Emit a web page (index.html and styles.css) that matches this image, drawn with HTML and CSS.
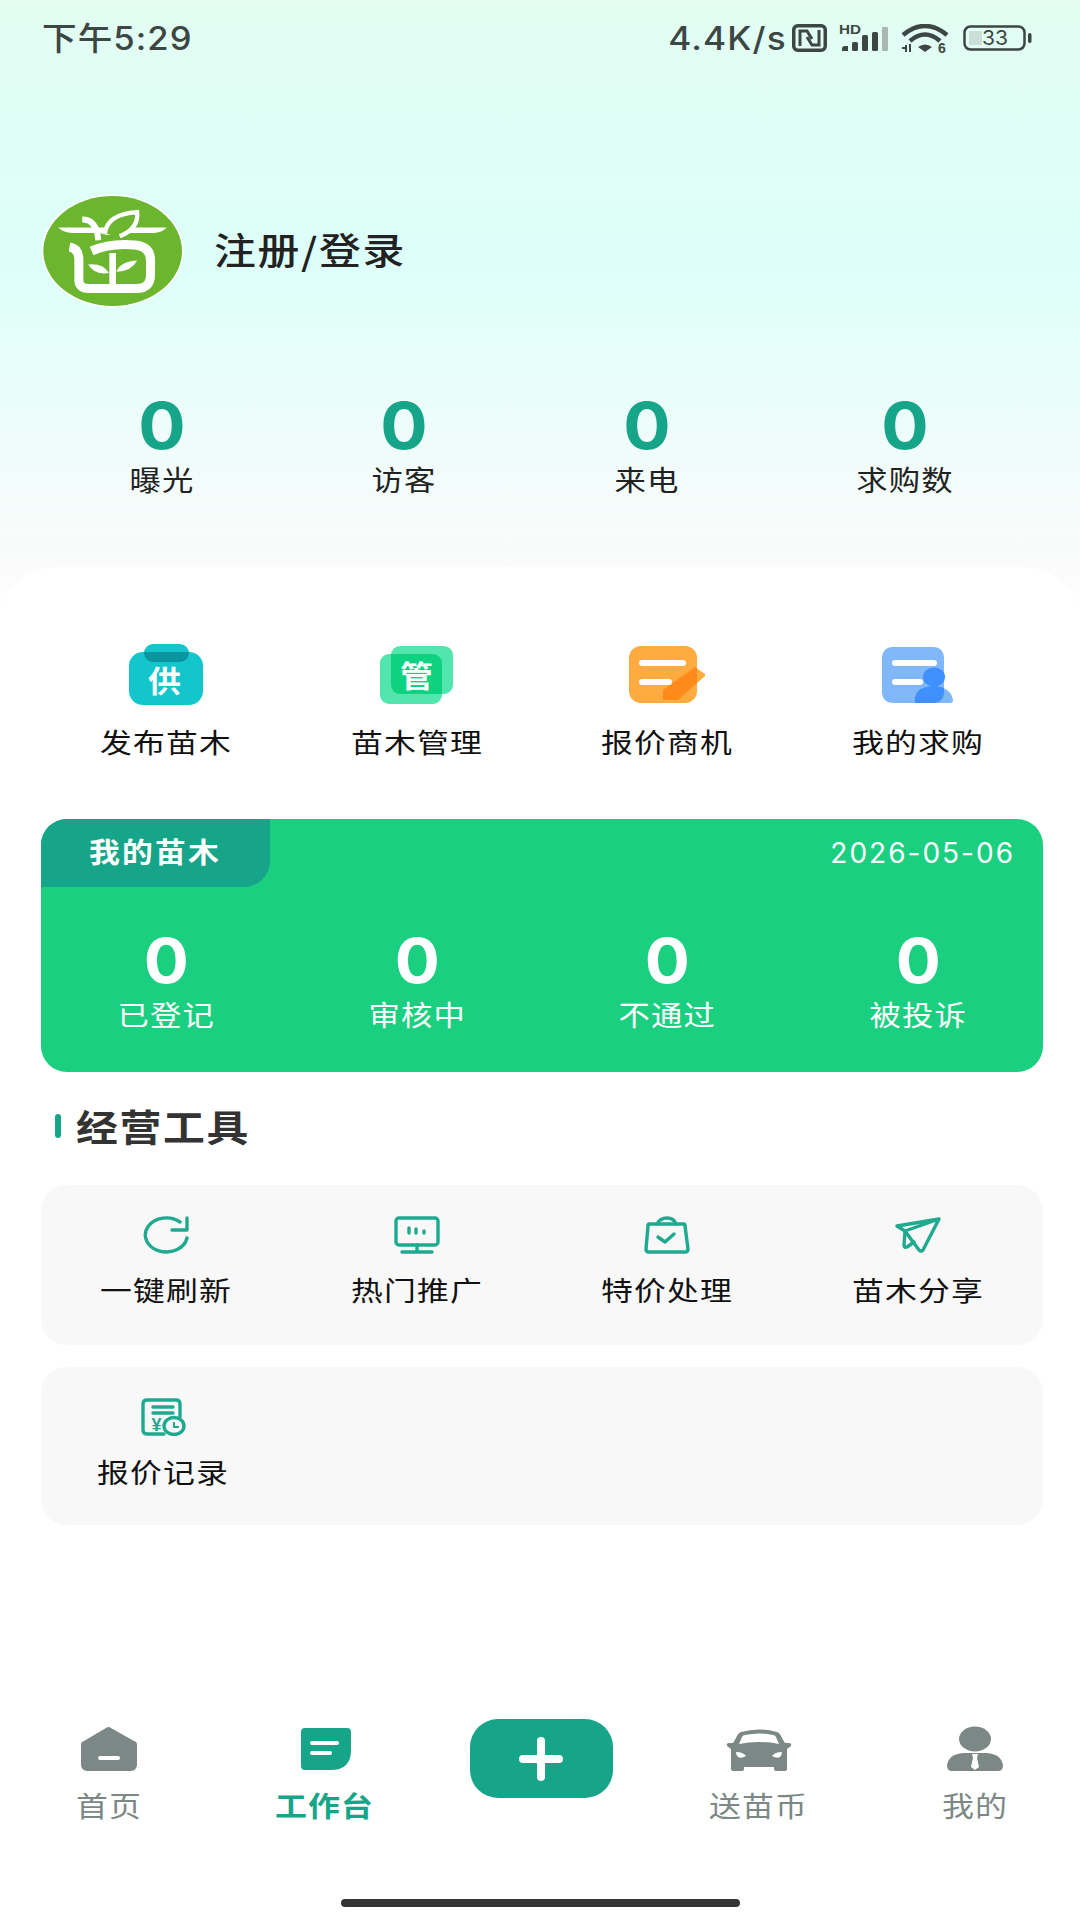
FILE: index.html
```html
<!DOCTYPE html>
<html lang="zh-CN">
<head>
    <meta charset="UTF-8">
    <meta name="viewport" content="width=device-width, initial-scale=1.0">
    <title>工作台</title>
    <link rel="stylesheet" href="styles.css">
</head>
<body>
    <div class="page">
        <div class="hero">
            <div class="status-bar">
                <span class="status-time">下午5:29</span>
                <div class="status-right">
                    <span class="status-speed">4.4K/s</span>
                    <svg width="35" height="28" viewBox="0 0 35 28"><rect x="1.750" y="1.750" width="31.500" height="24.500" rx="4" fill="none" stroke="#3c4643" stroke-width="3.500"/><path d="M8 22V7h7l5 8M27 6V21h-7l-5-8" fill="none" stroke="#3c4643" stroke-width="3"/></svg>
                    <svg width="50" height="28" viewBox="0 0 50 28"><text x="0" y="10" class="st-hd" textLength="22" lengthAdjust="spacingAndGlyphs">HD</text><path d="M3 27v-2q0-3 3-3h3v5z" fill="#3c4643"/><rect x="13" y="18" width="6" height="9" rx="1.500" fill="#3c4643"/><rect x="23" y="11" width="6" height="16" rx="1.500" fill="#3c4643"/><rect x="33" y="8" width="6" height="19" rx="1.500" fill="#3c4643"/><rect x="43" y="3" width="6" height="24" rx="1" fill="#a9b8b2"/></svg>
                    <svg width="48" height="29" viewBox="0 0 48 29"><path d="M2 11Q24-7 46 11M9 17Q24 4 39 17" fill="none" stroke="#3c4643" stroke-width="4.500"/><path d="M17 23q7-5 14 0l-7 5z" fill="#3c4643"/><path d="M1 24h5M5 21v7M9 20v8" fill="none" stroke="#3c4643" stroke-width="2"/><text x="37" y="29" class="st-six">6</text></svg>
                    <svg class="st-batt" width="70" height="26" viewBox="0 0 70 26"><rect x="1.500" y="1.500" width="60" height="23" rx="6" fill="none" stroke="#3c4643" stroke-width="2.500"/><path d="M6 6h13v14H6z" fill="#c9dfd7"/><rect x="65" y="8" width="3.500" height="10" rx="1.700" fill="#3c4643"/><text x="32" y="20" class="st-level" textLength="26" lengthAdjust="spacingAndGlyphs">33</text></svg>
                </div>
            </div>

            <div class="profile">
                <svg class="avatar" width="142" height="114" viewBox="68 70 424 340">
                    <ellipse cx="279" cy="240" rx="212" ry="168" fill="#fff"/>
                    <ellipse cx="279" cy="240" rx="207" ry="164" fill="#6cb52f"/>
                    <path d="M116 170H440Q425 188 395 186H300L262 192 240 186H165Q135 188 116 170Z" fill="#fff"/>
                    <path d="M188 146Q232 146 236 208" fill="none" stroke="#fff" stroke-width="18"/>
                    <path d="M256 188Q262 130 352 124Q358 172 300 196" fill="#6cb52f" stroke="#fff" stroke-width="13"/>
                    <path d="M150 228Q176 232 178 262V326Q178 352 208 352H350Q392 352 392 310V268Q392 226 345 222Q270 216 216 240" fill="none" stroke="#fff" stroke-width="27"/>
                    <path d="M279 246V350" stroke="#fff" stroke-width="20"/>
                    <path d="M206 280Q252 276 268 306Q224 312 206 280Z" fill="#fff"/>
                    <path d="M352 268Q302 270 290 302Q336 300 352 268Z" fill="#fff"/>
                </svg>
                <span class="profile-name">注册/登录</span>
            </div>

            <div class="stats">
                <div class="stat"><div class="stat-num">0</div><div class="stat-label">曝光</div></div>
                <div class="stat"><div class="stat-num">0</div><div class="stat-label">访客</div></div>
                <div class="stat"><div class="stat-num">0</div><div class="stat-label">来电</div></div>
                <div class="stat"><div class="stat-num">0</div><div class="stat-label">求购数</div></div>
            </div>
        </div>

        <div class="sheet">
            <div class="quick">
                <div class="quick-item">
                    <svg width="80" height="62" viewBox="0 0 80 62">
                        <rect x="18" y="0" width="45" height="18" rx="9" fill="#13c6cc"/>
                        <rect x="3" y="8" width="74" height="53" rx="14" fill="#13c6cc"/>
                        <path d="M18 9a9 9 0 0 0 9 9h27a9 9 0 0 0 9-9v-1H18z" fill="#0a95a1"/>
                        <text x="39" y="48" class="icon-char" textLength="34" lengthAdjust="spacingAndGlyphs">供</text>
                    </svg>
                    <span>发布苗木</span>
                </div>
                <div class="quick-item">
                    <svg width="80" height="62" viewBox="0 0 80 62">
                        <rect x="14" y="2" width="62" height="48" rx="9" fill="#52e6ae"/>
                        <rect x="3" y="10" width="62" height="50" rx="9" fill="#52e6ae"/>
                        <path d="M14 10H56a9 9 0 0 1 9 9V50H23a9 9 0 0 1-9-9z" fill="#0ed27f"/>
                        <text x="40" y="43" class="icon-char" textLength="34" lengthAdjust="spacingAndGlyphs">管</text>
                    </svg>
                    <span>苗木管理</span>
                </div>
                <div class="quick-item">
                    <svg width="80" height="62" viewBox="0 0 80 62">
                        <rect x="2" y="2" width="68" height="57" rx="12" fill="#ffab3f"/>
                        <path d="M68 23L78 30a2 2 0 0 1 0 2L70 39z" fill="#ffab3f"/>
                        <path d="M36 46L68 23 70 24.500V39L51 56H38Q36 56 36 54Z" fill="#ff8a1c"/>
                        <rect x="12" y="16" width="47" height="6" rx="3" fill="#fff"/>
                        <rect x="12" y="35" width="33" height="6" rx="3" fill="#fff"/>
                    </svg>
                    <span>报价商机</span>
                </div>
                <div class="quick-item">
                    <svg width="80" height="62" viewBox="0 0 80 62">
                        <rect x="4" y="3" width="62" height="56" rx="10" fill="#80b7f9"/>
                        <rect x="14" y="16" width="45" height="6" rx="3" fill="#fff"/>
                        <rect x="14" y="35" width="31" height="6" rx="3" fill="#fff"/>
                        <path d="M37 59q-2-16 18-17 18 1 20 14a3 3 0 0 1-3 3z" fill="#80b7f9"/>
                        <path d="M37 59q-2-16 18-17 6 0 11 2v5a10 10 0 0 1-10 10z" fill="#3f8ffc"/>
                        <ellipse cx="56" cy="33" rx="11" ry="9.500" fill="#3f8ffc"/>
                    </svg>
                    <span>我的求购</span>
                </div>
            </div>

            <div class="my-card">
                <div class="my-card-top">
                    <div class="my-card-tab"><span class="my-card-title">我的苗木</span></div>
                    <div class="my-card-date">2026-05-06</div>
                </div>
                <div class="my-card-stats">
                    <div class="my-stat"><div class="my-stat-num">0</div><div class="my-stat-label">已登记</div></div>
                    <div class="my-stat"><div class="my-stat-num">0</div><div class="my-stat-label">审核中</div></div>
                    <div class="my-stat"><div class="my-stat-num">0</div><div class="my-stat-label">不通过</div></div>
                    <div class="my-stat"><div class="my-stat-num">0</div><div class="my-stat-label">被投诉</div></div>
                </div>
            </div>

            <div class="section-title"><i class="section-bar"></i><span class="section-text">经营工具</span></div>

            <div class="tools">
                <div class="tool">
                    <svg width="48" height="38" viewBox="0 0 48 38"><path d="M45 22A21 17 0 1 1 38 6" class="line"/><path d="M45 2V14H30" class="line"/></svg>
                    <span>一键刷新</span>
                </div>
                <div class="tool">
                    <svg width="48" height="38" viewBox="0 0 48 38"><rect x="3" y="2" width="42" height="27" rx="3" class="line"/><path d="M24 29V36M9 36H39M16 12V17M23 13V17M31 15V17" class="line"/></svg>
                    <span>热门推广</span>
                </div>
                <div class="tool">
                    <svg width="48" height="38" viewBox="0 0 48 38"><path d="M6 8H41Q42 8 42 10L45 33Q45 36 42 36H6Q3 36 3 33L5 10Q5 8 6 8Z" class="line"/><path d="M14 8Q17 2 24 2Q31 2 33 8M15 21L22 26 31 18" class="line"/></svg>
                    <span>特价处理</span>
                </div>
                <div class="tool">
                    <svg width="48" height="38" viewBox="0 0 48 38"><path d="M45 3L3 10 11 15 45 3 29 34Q27 36 25 34L11 15 10 29Q10 32 13 31L20 26" class="line"/></svg>
                    <span>苗木分享</span>
                </div>
            </div>

            <div class="tools tools-single">
                <div class="tool">
                    <svg width="48" height="38" viewBox="0 0 48 38"><path d="M25 36H8Q4 36 4 32V6Q4 2 8 2H37Q41 2 41 6V19" class="line"/><path d="M14 9H34M14 15H34" class="line"/><text x="18" y="33" class="yen">¥</text><ellipse cx="35" cy="28" rx="10" ry="8.500" class="line"/><path d="M35 24V29H40" class="line-thin"/></svg>
                    <span>报价记录</span>
                </div>
            </div>

            <div class="nav">
                <div class="nav-item">
                    <svg width="60" height="46" viewBox="0 0 60 46"><path d="M27 2a4 4 0 0 1 5 0L55 15a4 4 0 0 1 3 4V39a6 6 0 0 1-6 6H8a6 6 0 0 1-6-6V19a4 4 0 0 1 3-4z" fill="#7c8885"/><rect x="19" y="30" width="22" height="4" rx="2" fill="#fff"/></svg>
                    <span>首页</span>
                </div>
                <div class="nav-item nav-active">
                    <svg width="60" height="46" viewBox="0 0 60 46"><path d="M10 2H52a4 4 0 0 1 4 4V24Q56 44 36 44H10a4 4 0 0 1-4-4V6a4 4 0 0 1 4-4z" fill="#17a589"/><rect x="15" y="15" width="29" height="4" rx="2" fill="#fff"/><rect x="15" y="25" width="22" height="4" rx="2" fill="#fff"/></svg>
                    <span>工作台</span>
                </div>
                <div class="nav-item">
                    <button class="plus-btn"><svg width="44" height="44" viewBox="0 0 44 44"><path d="M4 22H40M22 4V40" fill="none" stroke="#fff" stroke-width="8" stroke-linecap="round"/></svg></button>
                </div>
                <div class="nav-item">
                    <svg width="68" height="46" viewBox="0 0 68 46"><path d="M16 6Q34 1 52 6Q55 7 57 12L60 17H64Q67 17 66 20L62 23V43Q62 45 60 45H51Q49 45 49 43V41H19V43Q19 45 17 45H8Q6 45 6 43V23L2 20Q1 17 4 17H8L11 12Q13 7 16 6Z" fill="#7c8885"/><path d="M14 18L17 11Q18 9 20 9Q34 6 48 9Q50 9 51 11L54 18Q34 14 14 18Z" fill="#fff"/><path d="M11 26Q18 26 21 30Q16 33 13 31Q11 29 11 26ZM57 26Q50 26 47 30Q52 33 55 31Q57 29 57 26Z" fill="#fff"/></svg>
                    <span>送苗币</span>
                </div>
                <div class="nav-item">
                    <svg width="60" height="46" viewBox="0 0 60 46"><ellipse cx="30" cy="13" rx="16" ry="12.500" fill="#7c8885"/><path d="M2 39Q4 28 18 27H42Q56 28 58 39Q58 45 53 45H7Q2 45 2 39Z" fill="#7c8885"/><path d="M27 28H33L32 32 34 41 30 44 26 41 28 32Z" fill="#fff"/></svg>
                    <span>我的</span>
                </div>
            </div>
            <div class="home-bar"></div>
        </div>
    </div>
</body>
</html>
```

FILE: styles.css
```css
* {
    box-sizing: border-box;
}

body {
    margin: 0;
    font-family: "Noto Sans CJK SC", sans-serif;
    color: #111;
}

.page {
    width: 1080px;
    height: 1920px;
    display: flex;
    flex-direction: column;
    background: linear-gradient(#e3fdf2 0, #ddfff9 260px, #fbfbfb 567px, #fff 620px);
    overflow: hidden;
}

.hero {
    height: 567px;
    flex: none;
}

.status-bar {
    height: 76px;
    padding: 0 47px 0 42px;
    display: flex;
    align-items: center;
    justify-content: space-between;
    color: #3c4643;
}

.status-time {
    font-family: "Inter", "Noto Sans CJK SC", sans-serif;
    font-size: 32px;
    font-weight: 500;
    letter-spacing: 1px;
    margin-bottom: 4px;
    transform: scaleX(1.08);
    transform-origin: left center;
}

.status-right {
    display: flex;
    align-items: center;
    gap: 12px;
}

.status-speed {
    font-family: "Inter", sans-serif;
    font-size: 32px;
    font-weight: 500;
    letter-spacing: 1px;
    white-space: nowrap;
    flex: none;
    margin-right: -7px;
    transform: scaleX(1.1);
    transform-origin: right center;
}

.st-batt {
    margin-left: 2px;
}

.st-hd {
    font: bold 12px "Liberation Sans", sans-serif;
    fill: #3c4643;
}

.st-six {
    font: bold 14px "Liberation Sans", sans-serif;
    fill: #3c4643;
}

.st-level {
    font: 20px "Inter", sans-serif;
    fill: #3c4643;
    text-anchor: middle;
}

.profile {
    margin-top: 118px;
    padding-left: 42px;
    display: flex;
    align-items: center;
    gap: 30px;
}

.profile-name {
    font-size: 37px;
    font-weight: 500;
    letter-spacing: 1.500px;
    color: #222;
    margin-bottom: 4px;
    transform: scaleX(1.13);
    transform-origin: left center;
}

.stats {
    margin-top: 85px;
    padding-left: 41px;
    display: grid;
    grid-template-columns: 242px 242px 244px 272px;
}

.stat {
    text-align: center;
}

.stat-num {
    font-family: "Inter", sans-serif;
    font-weight: bold;
    font-size: 64px;
    line-height: 66px;
    color: #17a589;
    transform: scaleX(1.1);
}

.stat-label {
    font-size: 28px;
    line-height: 40px;
    letter-spacing: 1px;
    color: #222;
    transform: scaleX(1.12);
}

.sheet {
    flex: 1;
    background: #fff;
    border-radius: 56px 56px 0 0;
    padding-top: 77px;
    display: flex;
    flex-direction: column;
}

.quick {
    padding: 0 37px 0 41px;
    display: grid;
    grid-template-columns: repeat(4, 1fr);
}

.quick-item {
    display: flex;
    flex-direction: column;
    align-items: center;
    gap: 16px;
    font-size: 27px;
    line-height: 40px;
    letter-spacing: 1px;
}

.quick-item span {
    transform: scaleX(1.18);
}

.icon-char {
    font-size: 30px;
    font-weight: bold;
    fill: #fff;
    text-anchor: middle;
}

.my-card {
    margin: 57px 37px 0 41px;
    height: 253px;
    background: #1acf7f;
    border-radius: 26px;
    overflow: hidden;
    color: #fff;
}

.my-card-top {
    display: flex;
    justify-content: space-between;
    height: 68px;
}

.my-card-tab {
    width: 229px;
    background: #17a589;
    border-bottom-right-radius: 26px;
    text-align: center;
    font-size: 28px;
    font-weight: bold;
    line-height: 64px;
    letter-spacing: 2px;
}

.my-card-title {
    display: inline-block;
    transform: scaleX(1.1);
}

.my-card-date {
    font-family: "Inter", sans-serif;
    font-size: 28px;
    line-height: 68px;
    letter-spacing: 2px;
    padding-right: 28px;
}

.my-card-stats {
    display: grid;
    grid-template-columns: repeat(4, 1fr);
    padding-top: 41px;
}

.my-stat {
    text-align: center;
}

.my-stat-num {
    font-family: "Inter", sans-serif;
    font-weight: bold;
    font-size: 62px;
    line-height: 66px;
    transform: scaleX(1.08);
}

.my-stat-label {
    font-size: 28px;
    line-height: 40px;
    letter-spacing: 1px;
    transform: scaleX(1.12);
}

.section-title {
    margin: 32px 0 0 55px;
    display: flex;
    align-items: center;
    gap: 15px;
    font-size: 37px;
    font-weight: bold;
    line-height: 44px;
    letter-spacing: 1.500px;
    color: #333;
}

.section-bar {
    width: 6px;
    height: 24px;
    border-radius: 3px;
    background: #17a589;
}

.section-text {
    transform: scaleX(1.13);
    transform-origin: left center;
}

.tools {
    margin: 37px 37px 0 41px;
    height: 160px;
    padding-top: 31px;
    background: #f8f8f8;
    border-radius: 26px;
    display: grid;
    grid-template-columns: repeat(4, 1fr);
}

.tools-single {
    margin-top: 22px;
    height: 158px;
    padding-right: 26px;
}

.tool {
    display: flex;
    flex-direction: column;
    align-items: center;
    gap: 16px;
    font-size: 27px;
    line-height: 40px;
    letter-spacing: 1px;
}

.tool span {
    transform: scaleX(1.18);
}

.line {
    fill: none;
    stroke: #1fa98f;
    stroke-width: 3.400;
    stroke-linecap: round;
    stroke-linejoin: round;
}

.line-thin {
    fill: none;
    stroke: #1fa98f;
    stroke-width: 2;
}

.yen {
    font: bold 18px "Liberation Sans", sans-serif;
    fill: #1fa98f;
    text-anchor: middle;
}

.nav {
    margin-top: auto;
    height: 120px;
    display: grid;
    grid-template-columns: 218px 214px 216px 222px 210px;
}

.nav-item {
    display: flex;
    flex-direction: column;
    align-items: center;
    gap: 13px;
    font-size: 28px;
    line-height: 40px;
    letter-spacing: 1px;
    color: #7c8885;
}

.nav-item span {
    transform: scaleX(1.14);
}

.nav-active {
    color: #17a589;
    font-weight: bold;
}

.plus-btn {
    width: 143px;
    height: 79px;
    margin-top: -7px;
    margin-left: 2px;
    border: none;
    border-radius: 28px;
    background: #17a589;
    display: flex;
    align-items: center;
    justify-content: center;
    padding: 0;
}

.home-bar {
    width: 399px;
    height: 8px;
    margin: 53px auto 13px;
    border-radius: 4px;
    background: #333;
}
```
